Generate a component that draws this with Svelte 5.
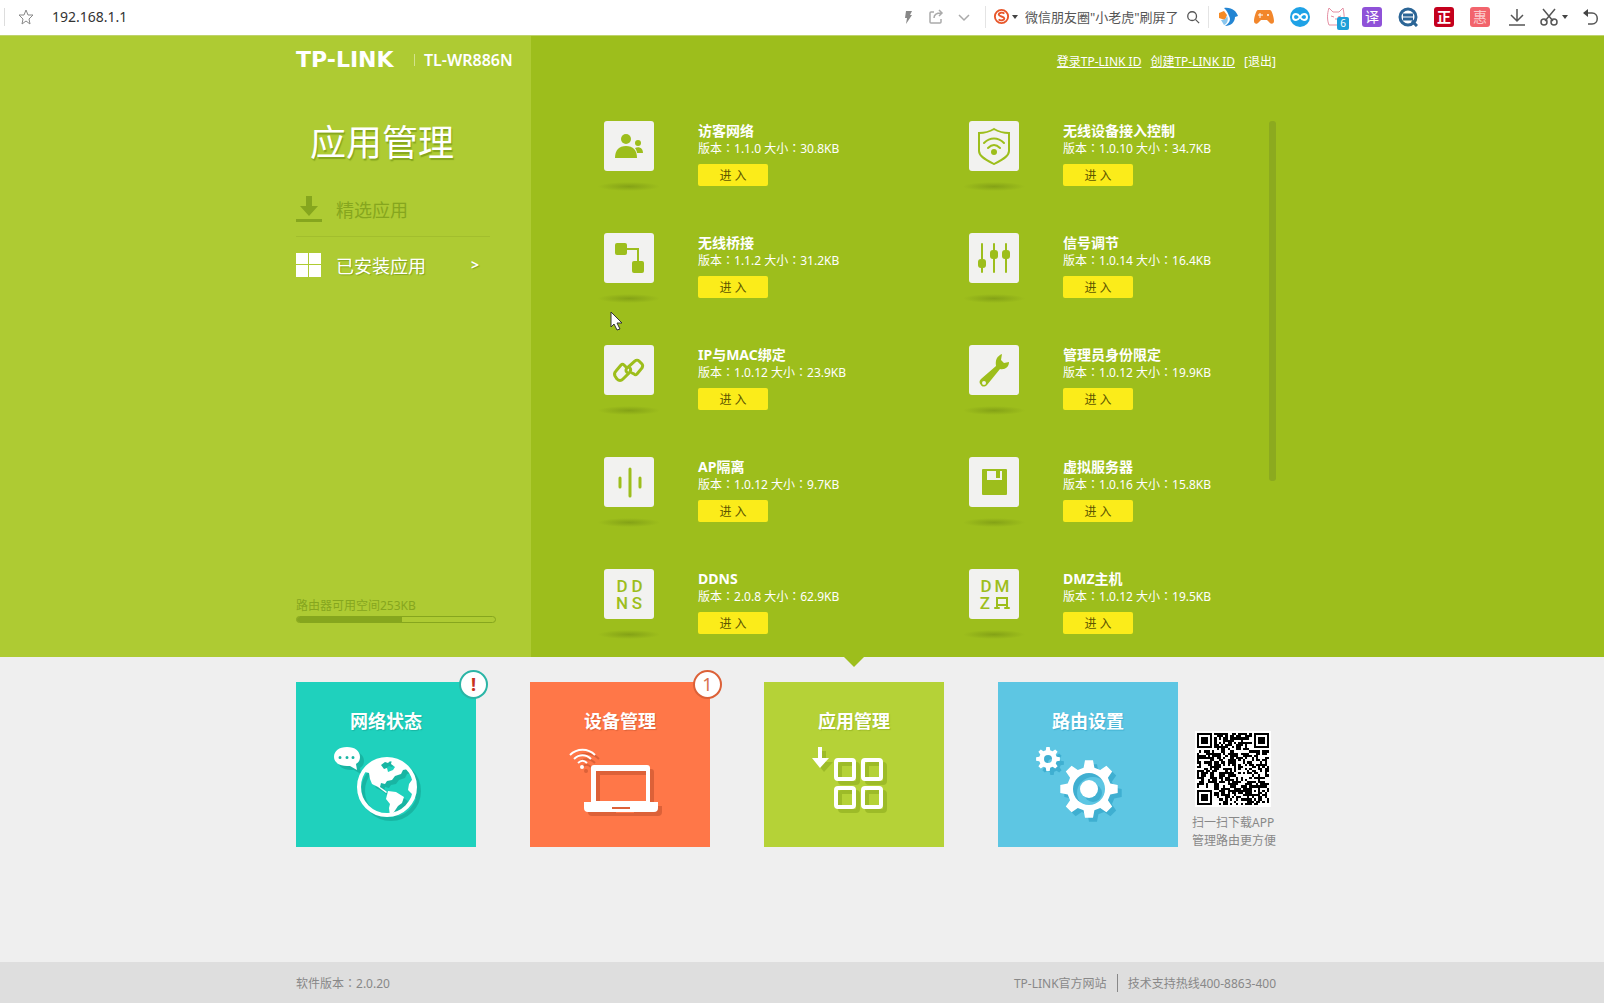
<script lang="ts">
  type App = { icon: string; name: string; version: string; size: string };

  const apps: App[] = [
    { icon: 'guest', name: '访客网络', version: '1.1.0', size: '30.8KB' },
    { icon: 'shield', name: '无线设备接入控制', version: '1.0.10', size: '34.7KB' },
    { icon: 'bridge', name: '无线桥接', version: '1.1.2', size: '31.2KB' },
    { icon: 'signal', name: '信号调节', version: '1.0.14', size: '16.4KB' },
    { icon: 'link', name: 'IP与MAC绑定', version: '1.0.12', size: '23.9KB' },
    { icon: 'wrench', name: '管理员身份限定', version: '1.0.12', size: '19.9KB' },
    { icon: 'isolate', name: 'AP隔离', version: '1.0.12', size: '9.7KB' },
    { icon: 'server', name: '虚拟服务器', version: '1.0.16', size: '15.8KB' },
    { icon: 'ddns', name: 'DDNS', version: '2.0.8', size: '62.9KB' },
    { icon: 'dmz', name: 'DMZ主机', version: '1.0.12', size: '19.5KB' },
  ];

  let url = $state('192.168.1.1');
  let query = $state('微信朋友圈"小老虎"刷屏了');
  const usedPercent = 53;

  /** Outline of an eight-tooth gear */
  function gear(cx: number, cy: number, outer: number, inner: number) {
    const points: string[] = [];
    for (let i = 0; i < 8; i++) {
      const mid = (i * Math.PI) / 4;
      for (const [offset, radius] of [[-0.25, inner], [-0.14, outer], [0.14, outer], [0.25, inner]]) {
        const x = cx + radius * Math.sin(mid + offset);
        const y = cy - radius * Math.cos(mid + offset);
        points.push(`${x.toFixed(1)},${y.toFixed(1)}`);
      }
    }
    return points.join(' ');
  }

  const QR_SIZE = 33;

  /** Dark modules of the download code as one path */
  function qrPath() {
    let seed = 20177;
    let d = '';
    const ring = (x: number, y: number, cx: number, cy: number) =>
      Math.max(Math.abs(x - cx), Math.abs(y - cy));
    for (let y = 0; y < QR_SIZE; y++) {
      for (let x = 0; x < QR_SIZE; x++) {
        seed = (seed * 1103515245 + 12345) % 2147483648;
        let dark = seed / 2147483648 < 0.56;
        for (const [cx, cy] of [[3, 3], [QR_SIZE - 4, 3], [3, QR_SIZE - 4]]) {
          const r = ring(x, y, cx, cy);
          if (r <= 4) dark = r === 3 || r <= 1;
        }
        const a = ring(x, y, QR_SIZE - 7, QR_SIZE - 7);
        if (a <= 2) dark = a !== 1;
        if (dark) d += `M${x} ${y}h1v1h-1z`;
      }
    }
    return d;
  }
</script>

{#snippet appIcon(name: string)}
  <svg class="app-icon" viewBox="0 0 50 50" aria-hidden="true">
    {#if name === 'guest'}
      <circle cx="22" cy="18" r="5" />
      <path d="M11 37c0-8 4-12 11-12s11 4 11 12z" />
      <circle cx="34" cy="22" r="3" />
      <path d="M31 27c4-2 8 0 8 5h-6c0-2-1-3-2-5z" />
    {:else if name === 'shield'}
      <path class="line thin" d="M25 8c5 3 10 4 15 4v18c0 6-9 10-15 13-6-3-15-7-15-13V12c5 0 10-1 15-4z" />
      <path class="line thin" d="M15 22c6-6 14-6 20 0M19 27c4-4 8-4 12 0" />
      <circle cx="25" cy="31" r="3" />
    {:else if name === 'bridge'}
      <rect x="11" y="10" width="12" height="12" rx="2" />
      <rect x="28" y="28" width="12" height="12" rx="2" />
      <path class="line thin" d="M22 16h12v13" />
    {:else if name === 'signal'}
      <path class="line thin" d="M13 11v28M25 11v28M37 11v28" />
      <rect x="9" y="26" width="8" height="9" rx="3" />
      <rect x="21" y="17" width="8" height="9" rx="3" />
      <rect x="33" y="17" width="8" height="9" rx="3" />
    {:else if name === 'link'}
      <g class="line">
        <path d="M22 22l-2-2c-1-1-2-1-3 0l-5 6c-2 2-2 3-1 5l2 3c2 2 4 2 6 0l7-7c1-2 1-3 0-4" />
        <path d="M28 28l2 1c1 1 2 1 3 0l5-6c1-2 1-3 0-4l-3-3c-1-1-3-1-4 0l-8 7c-2 2-1 4 1 5" />
      </g>
    {:else if name === 'wrench'}
      <path fill-rule="evenodd" d="M33 9l-1 6 3 3 5-1c0 5-4 8-9 7L18 40c-2 2-5 2-6 0-2-2-2-4 0-6l15-13c-1-6 1-10 6-12zM15 36a2 2 0 1 0 0 4 2 2 0 0 0 0-4z" />
    {:else if name === 'isolate'}
      <path class="line" d="M16 21v9M26 12v27M36 21v9" />
    {:else if name === 'server'}
      <path fill-rule="evenodd" d="M14 12h23q1 0 1 1v24q0 1-1 1H14q-1 0-1-1V13q0-1 1-1zM18 14v9h15v-9zM27 14h4v7h-4z" />
    {:else if name === 'ddns'}
      <text x="18" y="23">D</text>
      <text x="33" y="23">D</text>
      <text x="18" y="40">N</text>
      <text x="33" y="40">S</text>
    {:else}
      <text x="17" y="23">D</text>
      <text x="33" y="23">M</text>
      <text x="16" y="40">Z</text>
      <path class="line thin" d="M28 39V29h10v10M26 39h4M36 39h4M28 36h10" />
    {/if}
  </svg>
{/snippet}

<div class="page">
  <header class="toolbar">
    <svg class="star" viewBox="0 0 18 18" aria-hidden="true"><path d="M9 2l2 5h5l-4 4 1 5-4-3-4 3 1-5-4-4h5z" /></svg>
    <input class="url" type="text" aria-label="地址" bind:value={url} />

    <div class="actions">
      <button aria-label="加速"><svg viewBox="0 0 16 16"><path fill="#888" d="M6 2h6l-2 4h2l-6 9 1-6H5z" /></svg></button>
      <button aria-label="分享"><svg viewBox="0 0 16 16"><path class="stroke light" d="M6 3H3q-1 0-1 1v9q0 1 1 1h9q1 0 1-1v-3M6 9c0-3 2-5 7-5M11 1l3 3-3 3" /></svg></button>
      <button aria-label="展开"><svg viewBox="0 0 16 16"><path class="stroke light" d="M3 6l5 5 5-5" /></svg></button>
    </div>

    <div class="search">
      <svg class="sogou" viewBox="0 0 18 18" aria-hidden="true">
        <circle cx="9" cy="9" r="7" fill="#fff" stroke="#e8562a" stroke-width="2" />
        <path d="M12 6c-2-2-6-1-6 1s6 2 6 4-4 3-6 1" fill="none" stroke="#e8562a" stroke-width="2" />
      </svg>
      <span class="caret"></span>
      <input type="text" aria-label="搜索" bind:value={query} />
      <button aria-label="搜索"><svg viewBox="0 0 16 16"><circle class="stroke" cx="7" cy="7" r="5" /><path class="stroke" d="M11 11l4 4" /></svg></button>
    </div>

    <div class="extensions">
      <button aria-label="浏览器医生">
        <svg viewBox="0 0 20 20">
          <path fill="#2385d3" d="M6 1c8-1 12 3 14 8l-3 1c0 5-4 9-10 9 5-3 6-7 4-10-1-3-2-5-5-8z" />
          <path fill="#f58a24" d="M1 6l5-2 3 4-2 5-6-2z" />
          <path fill="#8ac6ee" d="M3 13c3 0 5-1 6-4 2 4 0 8-3 9z" />
        </svg>
      </button>
      <button aria-label="游戏">
        <svg viewBox="0 0 20 20">
          <path fill="#f2862b" d="M4 3h12c2 0 4 8 4 11s-3 4-5 1l-2-2H7l-2 2c-2 3-5 2-5-1S2 3 4 3z" />
          <path d="M4 8h5M6 6v5" stroke="#fff" stroke-width="1" />
          <circle cx="14" cy="8" r="1" fill="#fff" />
        </svg>
      </button>
      <button aria-label="云盘">
        <svg viewBox="0 0 20 20">
          <circle cx="10" cy="10" r="10" fill="#1fa2e6" />
          <path d="M10 10c-2-3-3-3-4-3-4 0-4 6 0 6 1 0 2 0 4-3s3-3 4-3c4 0 4 6 0 6-1 0-2 0-4-3z" fill="none" stroke="#fff" stroke-width="2" />
        </svg>
      </button>
      <button class="cat" aria-label="猫">
        <svg viewBox="0 0 20 20"><path d="M3 18c-2-5-2-11 0-17l4 4h6l4-4c1 5 2 11 0 17zM5 9l3 1M15 9l-3 1M9 12h2" fill="none" stroke="#e58fa3" /></svg>
        <span>6</span>
      </button>
      <button class="tag translate">译</button>
      <button aria-label="查询">
        <svg viewBox="0 0 20 20">
          <circle cx="10" cy="10" r="8" fill="#fff" stroke="#2b6596" stroke-width="3" />
          <path d="M5 8h10M5 12h10M14 14l5 5" stroke="#2b6596" stroke-width="3" />
        </svg>
      </button>
      <button class="tag genuine">正</button>
      <button class="tag deals">惠</button>
    </div>

    <div class="tools">
      <button aria-label="下载"><svg viewBox="0 0 18 18"><path class="stroke" d="M9 1v12M3 7l6 6 6-6M1 17h16" /></svg></button>
      <button class="cut" aria-label="截图">
        <svg viewBox="0 0 18 18">
          <path class="stroke" d="M3 1l10 12M15 1L5 13" />
          <circle class="stroke" cx="4" cy="14" r="3" /><circle class="stroke" cx="14" cy="14" r="3" />
        </svg>
        <span class="caret"></span>
      </button>
      <button aria-label="恢复"><svg viewBox="0 0 18 18"><path class="stroke" d="M2 5h8c7 0 7 11 0 11H6" /><path d="M1 5l5-4v8z" fill="#444" /></svg></button>
    </div>
  </header>

  <div class="hero">
    <aside class="sidebar">
      <div class="brand">
        <span class="logo">TP-LINK</span>
        <span class="model">TL-WR886N</span>
      </div>
      <h1>应用管理</h1>
      <nav class="menu">
        <a href="#featured">
          <svg viewBox="0 0 26 26" aria-hidden="true"><path fill="#86a61e" d="M10 0h6v10h6l-9 10-9-10h6zM0 23h26v3H0z" /></svg>
          精选应用
        </a>
        <a class="active" href="#installed">
          <svg viewBox="0 0 26 26" aria-hidden="true"><path fill="#fff" d="M0 1h12v11H0zM13 1h12v11H13zM0 13h12v12H0zM13 13h12v12H13z" /></svg>
          已安装应用
          <span class="arrow">&gt;</span>
        </a>
      </nav>
      <div class="storage">
        <div>路由器可用空间253KB</div>
        <div class="meter"><div style:width="{usedPercent}%"></div></div>
      </div>
    </aside>

    <main>
      <div class="account">
        <a href="#login">登录TP-LINK ID</a>
        <a href="#register">创建TP-LINK ID</a>
        <a class="logout" href="#logout">[退出]</a>
      </div>
      <div class="scroll-area">
        <div class="apps">
          {#each apps as app}
            <article class="app">
              <div class="picture">
                {@render appIcon(app.icon)}
                <div class="shade"></div>
              </div>
              <div class="info">
                <h2>{app.name}</h2>
                <p>版本<span class="colon">：</span>{app.version} 大小<span class="colon">：</span>{app.size}</p>
                <button>进 入</button>
              </div>
            </article>
          {/each}
        </div>
        <div class="scrollbar"></div>
      </div>
    </main>

    <svg class="cursor" viewBox="0 0 13 20" aria-hidden="true"><path d="M1 1v15l3-3 3 6 3-1-3-6h5z" fill="#fff" stroke="#333" /></svg>
  </div>

  <section class="dock">
    <nav class="tiles">
      <a class="tile status" href="#status">
        <span>网络状态</span>
        <svg viewBox="0 60 180 105" aria-hidden="true">
          <path fill-rule="evenodd" d="M51 65c8 0 13 4 13 10 0 3-1 5-4 7l1 6-7-4h-3c-8 0-13-4-13-9 0-6 5-10 13-10zM44 74a1.500 1.500 0 1 0 0 3 1.500 1.500 0 0 0 0-3zM51 74a1.500 1.500 0 1 0 0 3 1.500 1.500 0 0 0 0-3zM57 74a1.500 1.500 0 1 0 0 3 1.500 1.500 0 0 0 0-3z" />
          <circle class="globe" cx="91" cy="105" r="28" />
          <path d="M69 90l6-8 8-5h13l-4 4-3-1-4 3 3 4 3-1 1 4 5-2 2-3-4-3 1-4 8 1 8 8-5 1-2 4-6 2-3 4-5 1-2 3-4-1-1 4 3 2 4 3-1 1-8-6-6-3-2-5-1-6z" />
          <path d="M92 109l8 1 8 5-2 6-4 3-4 6-4 4-1-8 1-4-4-5zM118 95l-5 7-1 6 5 5z" />
        </svg>
        <em class="badge">!</em>
      </a>
      <a class="tile devices" href="#devices">
        <span>设备管理</span>
        <svg viewBox="0 60 180 105" aria-hidden="true">
          <circle cx="52" cy="85" r="2" />
          <path class="wave" d="M40 73c7-7 18-7 25 0M44 77c5-5 12-5 17 0M48 81c3-3 6-3 9 0" />
          <path fill-rule="evenodd" d="M64 83h53q3 0 3 3v34h8v6q0 4-4 4H58q-4 0-4-4v-6h7V86q0-3 3-3zM66 89v30h50V89zM82 125v2h18v-2z" />
        </svg>
        <em class="badge">1</em>
      </a>
      <a class="tile apps-tile" href="#apps" aria-current="page">
        <i class="pointer"></i>
        <span>应用管理</span>
        <svg viewBox="0 60 180 105" aria-hidden="true">
          <path d="M54 65h4v11h7l-9 10-8-10h6z" />
          <g class="squares">
            <rect x="72" y="78" width="18" height="19" rx="2" />
            <rect x="99" y="78" width="18" height="19" rx="2" />
            <rect x="72" y="106" width="18" height="19" rx="2" />
            <rect x="99" y="106" width="18" height="19" rx="2" />
          </g>
        </svg>
      </a>
      <a class="tile settings" href="#settings">
        <span>路由设置</span>
        <svg viewBox="0 60 180 105" aria-hidden="true">
          <mask id="holes">
            <rect x="0" y="60" width="180" height="105" fill="#fff" />
            <circle cx="50" cy="77" r="4" fill="#000" />
            <circle cx="91" cy="107" r="16" fill="#000" />
            <circle cx="91" cy="107" r="9" fill="#fff" />
          </mask>
          <g mask="url(#holes)">
            <polygon points={gear(50, 77, 12, 9)} />
            <polygon points={gear(91, 107, 29, 22)} />
          </g>
        </svg>
      </a>
    </nav>
    <div class="download">
      <svg viewBox="0 0 {QR_SIZE} {QR_SIZE}" role="img" aria-label="APP" shape-rendering="crispEdges"><path d={qrPath()} /></svg>
      <p>扫一扫下载APP<br />管理路由更方便</p>
    </div>
  </section>

  <footer>
    <span>软件版本<span class="colon">：</span>2.0.20</span>
    <div class="contact">
      <a href="#site">TP-LINK官方网站</a>
      <span>技术支持热线400-8863-400</span>
    </div>
  </footer>
</div>

<style>
  :global(body) {
    margin: 0;
    background: #efefef;
  }

  .page {
    --left: calc(50vw - 506px);
    --right: calc(50vw - 474px);
    display: flex;
    flex-direction: column;
    min-height: 100vh;
    font-family: "Noto Sans", "Noto Sans CJK SC", sans-serif;
    font-size: 12px;
  }

  h1, h2, p {
    margin: 0;
    font-weight: normal;
  }

  a {
    color: inherit;
    text-decoration: none;
  }

  button, input {
    padding: 0;
    border: 0;
    background: none;
    font-family: inherit;
  }

  /* Centred full-width colon */
  .colon {
    font-family: "Noto Sans CJK TC", sans-serif;
    line-height: 1;
  }

  /* Browser bar */

  .toolbar {
    display: flex;
    align-items: center;
    box-sizing: border-box;
    height: 36px;
    padding: 0 4px 2px 4px;
    background: #fff;
    border-bottom: 1px solid #bfd36c;
  }

  .toolbar svg {
    display: block;
    width: 100%;
    height: 100%;
  }

  .toolbar button {
    flex: none;
    width: 16px;
    height: 16px;
  }

  .toolbar .star {
    flex: none;
    box-sizing: border-box;
    width: 31px;
    height: 18px;
    padding-left: 12px;
    border-left: 1px solid #ddd;
    fill: none;
    stroke: #888;
  }

  .url {
    flex: 1;
    min-width: 80px;
    margin-left: 17px;
    color: #333;
    font-size: 14px;
  }

  .stroke {
    fill: none;
    stroke: #555;
    stroke-width: 1.5;
  }

  .stroke.light {
    stroke: #aaa;
  }

  .actions {
    display: flex;
    gap: 12px;
    padding-right: 13px;
  }

  .search {
    display: flex;
    align-items: center;
    height: 22px;
    padding: 0 8px 0 7px;
    border: solid #e4e4e4;
    border-width: 0 1px;
  }

  .search .sogou {
    width: 17px;
    height: 17px;
  }

  .search input {
    width: 161px;
    margin-left: 7px;
    color: #555;
    font-size: 13px;
  }

  .search button {
    width: 14px;
    height: 14px;
  }

  .caret {
    width: 0;
    margin-left: 2px;
    border: 3px solid transparent;
    border-top: 4px solid #444;
    border-bottom: 0;
  }

  .extensions {
    display: flex;
    gap: 16px;
    margin-left: 9px;
  }

  .extensions button {
    position: relative;
    width: 20px;
    height: 20px;
  }

  .cat span {
    position: absolute;
    right: -3px;
    bottom: -3px;
    width: 12px;
    background: #1e9fd8;
    border-radius: 2px;
    color: #fff;
    font-size: 10px;
    line-height: 13px;
  }

  .tag {
    border-radius: 3px;
    color: #fff;
    font-size: 14px;
    line-height: 20px;
  }

  .translate {
    background: #8f52d8;
  }

  .genuine {
    background: #c4001d;
    font-weight: bold;
  }

  .deals {
    background: #f2646c;
    color: #fbc9cb;
  }

  .tools {
    display: flex;
    gap: 14px;
    margin-left: 18px;
  }

  .tools button {
    width: 18px;
    height: 18px;
  }

  .tools .cut {
    display: flex;
    align-items: center;
    width: 28px;
  }

  .tools .cut svg {
    flex: none;
    width: 18px;
  }

  .cut .caret {
    margin-left: 4px;
  }

  /* Green area */

  .hero {
    position: relative;
    display: grid;
    grid-template-columns: calc(50vw - 271px) 1fr;
    background: #9dbe1c;
    color: #fff;
  }

  .sidebar {
    display: flex;
    flex-direction: column;
    padding: 0 16px 34px var(--left);
    background: #aecb33;
  }

  .brand {
    display: flex;
    align-items: center;
    height: 47px;
    white-space: nowrap;
  }

  .logo {
    flex: none;
    width: 118px;
    font-family: "DejaVu Sans", sans-serif;
    font-size: 22px;
    font-weight: bold;
    line-height: 24px;
  }

  .model {
    padding-left: 9px;
    border-left: 1px solid #d3e38c;
    font-size: 16px;
    font-weight: 600;
    line-height: 12px;
  }

  h1 {
    margin: 30px 0 8px 14px;
    font-size: 36px;
    line-height: 60px;
    text-shadow: 1px 2px 1px #86a61e;
  }

  .menu {
    width: 194px;
    font-size: 18px;
  }

  .menu a {
    display: flex;
    align-items: center;
    height: 55px;
    color: #86a61e;
  }

  .menu a:first-child {
    border-bottom: 1px solid #a2be2d;
  }

  .menu .active {
    color: #fff;
    text-shadow: 1px 1px 1px #86a61e;
  }

  .menu svg {
    width: 26px;
    height: 26px;
    margin-right: 14px;
  }

  .arrow {
    margin-left: auto;
    padding-right: 11px;
    font-size: 14px;
    font-weight: bold;
  }

  .storage {
    width: 200px;
    margin-top: auto;
    color: #86a61e;
    line-height: 20px;
  }

  .meter {
    box-sizing: border-box;
    height: 7px;
    border: 1px solid #86a61e;
    border-radius: 4px;
    overflow: hidden;
  }

  .meter div {
    height: 100%;
    background: #86a61e;
  }

  main {
    padding: 0 var(--right) 18px 73px;
  }

  .account {
    display: flex;
    justify-content: flex-end;
    gap: 9px;
    padding: 16px 0 49px;
    line-height: 20px;
  }

  .account a {
    text-decoration: underline;
  }

  .account .logout {
    text-decoration: none;
  }

  .scroll-area {
    display: flex;
  }

  .apps {
    flex: 1;
    display: grid;
    grid-template-columns: 365px 1fr;
    row-gap: 42px;
  }

  .app {
    display: flex;
    height: 70px;
    gap: 44px;
    white-space: nowrap;
  }

  .app-icon {
    display: block;
    width: 50px;
    height: 50px;
    background: #f2f2f0;
    border-radius: 3px;
    fill: #9dbe1c;
  }

  .app-icon text {
    font-family: Roboto, sans-serif;
    font-size: 17px;
    font-weight: 500;
    text-anchor: middle;
  }

  .line {
    fill: none;
    stroke: #9dbe1c;
    stroke-width: 3;
    stroke-linecap: round;
  }

  .line.thin {
    stroke-width: 2;
  }

  .shade {
    height: 9px;
    margin: 11px -6px 0;
    background: radial-gradient(closest-side, #84a216, #9dbe1c);
  }

  h2 {
    font-size: 14px;
    font-weight: bold;
    line-height: 20px;
  }

  .info p {
    line-height: 16px;
  }

  .info button {
    display: block;
    width: 70px;
    height: 22px;
    margin-top: 7px;
    background: #fbec1a;
    border-radius: 2px;
    color: #5e5600;
    font-size: 12px;
    cursor: pointer;
  }

  .scrollbar {
    width: 7px;
    height: 360px;
    background: #8caa1f;
    border-radius: 3px;
  }

  .cursor {
    position: absolute;
    left: calc(50vw - 192px);
    top: 275px;
    width: 13px;
    height: 20px;
  }

  /* Bottom navigation */

  .dock {
    flex: 1;
    display: flex;
    justify-content: space-between;
    padding: 25px var(--right) 30px var(--left);
  }

  .tiles {
    display: flex;
    gap: 54px;
  }

  .tile {
    position: relative;
    display: flex;
    flex-direction: column;
    width: 180px;
    height: 165px;
    color: #fff;
  }

  .tile > span {
    height: 42px;
    padding-top: 18px;
    font-size: 18px;
    font-weight: bold;
    line-height: 42px;
    text-align: center;
    text-shadow: 1px 1px 1px var(--shadow);
  }

  .tile svg {
    width: 180px;
    height: 105px;
    fill: #fff;
    filter: drop-shadow(4px 4px 0 var(--shadow));
  }

  .status {
    --shadow: #18b5a3;
    background: #1fd1bd;
  }

  .devices {
    --shadow: #dc6138;
    background: #ff7748;
  }

  .apps-tile {
    --shadow: #9dbb28;
    background: #b5d237;
  }

  .settings {
    --shadow: #3fafd1;
    background: #5dc6e3;
  }

  .globe, .squares {
    fill: none;
    stroke: #fff;
    stroke-width: 4;
  }

  .wave {
    fill: none;
    stroke: #fff;
    stroke-width: 2;
  }

  .badge {
    position: absolute;
    top: -12px;
    right: -12px;
    box-sizing: border-box;
    width: 29px;
    height: 29px;
    background: #fff;
    border: 2px solid #2bb5a6;
    border-radius: 50%;
    color: #c8321e;
    font-size: 18px;
    font-style: normal;
    font-weight: bold;
    line-height: 25px;
    text-align: center;
  }

  .devices .badge {
    border-color: #dc6138;
    color: #d8714f;
    font-weight: normal;
  }

  .pointer {
    position: absolute;
    top: -25px;
    left: 80px;
    border: 10px solid transparent;
    border-top-color: #9dbe1c;
    border-bottom: 0;
  }

  .download {
    padding-top: 49px;
    color: #888;
  }

  .download svg {
    display: block;
    width: 72px;
    height: 72px;
    margin: 0 0 7px 3px;
    background: #fff;
    border: 2px solid #fff;
  }

  .download p {
    line-height: 18px;
  }

  footer {
    display: flex;
    justify-content: space-between;
    align-items: center;
    height: 41px;
    padding: 0 var(--right) 0 var(--left);
    background: #dedede;
    color: #888;
  }

  .contact {
    display: flex;
  }

  .contact span {
    margin-left: 10px;
    padding-left: 10px;
    border-left: 1px solid #888;
  }
</style>
